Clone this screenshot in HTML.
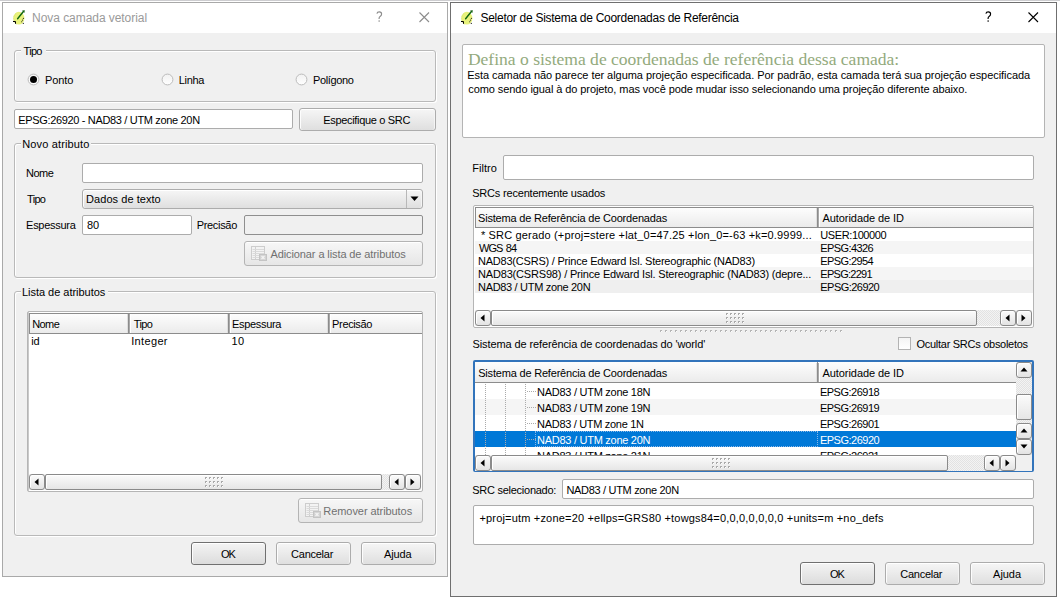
<!DOCTYPE html>
<html><head><meta charset="utf-8"><title>QGIS dialogs</title><style>
*{margin:0;padding:0}
html,body{width:1060px;height:600px;overflow:hidden;background:#fff}
body{position:relative;font-family:'Liberation Sans',sans-serif}
.a{position:absolute;box-sizing:border-box}
.t{position:absolute;white-space:nowrap}
.dlg{background:#f0f0f0}
.title{background:#fff}
.grp{border:1px solid #b9b9b9;border-radius:3px;box-shadow:inset 1px 1px 0 #fff, 1px 1px 0 #fff}
.gtl{background:#f0f0f0}
.le{background:#fff;border:1px solid #acacac;border-radius:2px}
.led{background:#f0f0f0;border:1px solid #8f8f8f;border-radius:2px}
.btn{border:1px solid #acacac;border-radius:3px;background:linear-gradient(#f6f6f6,#dfdfdf);box-shadow:inset 0 1px 0 #fff,inset 1px 0 0 #fdfdfd,inset -1px 0 0 #f4f4f4}
.btnd{border:1px solid #707070;border-radius:3px;background:linear-gradient(#f4f4f4,#dcdcdc);box-shadow:inset 0 1px 0 #fff,inset 1px 0 0 #fdfdfd}
.btnx{border:1px solid #b4b4b4;border-radius:3px;background:linear-gradient(#f7f7f7,#e6e6e6);box-shadow:inset 0 1px 0 #fff}
.frame{background:#fff;border:1px solid #b5b5b5;border-radius:2px}
.hdr{background:linear-gradient(#fdfdfd,#ebebeb);border-top:1px solid #8c8c8c;border-bottom:1px solid #8c8c8c}
.hdiv{background:#8c8c8c}
.sbtn{border:1px solid #8a8a8a;border-radius:3px;background:linear-gradient(#fbfbfb,#e3e3e3);box-shadow:inset 1px 1px 0 #fff}
.slider{border:1px solid #8a8a8a;border-radius:2px;background:linear-gradient(#fbfbfb,#e6e6e6);box-shadow:inset 1px 1px 0 #fff}
.track{background-color:#f3f3f3;background-image:linear-gradient(45deg,#e2e2e2 25%,transparent 25%,transparent 75%,#e2e2e2 75%),linear-gradient(45deg,#e2e2e2 25%,transparent 25%,transparent 75%,#e2e2e2 75%);background-size:2px 2px;background-position:0 0,1px 1px}
.altrow{background:#f5f5f5}
</style></head><body>
<div class="a " style="left:0px;top:0px;width:1060px;height:1px;background:#cdcdd0"></div>
<div class="a dlg" style="left:2px;top:2px;width:446px;height:575px;border:1px solid #a9a9a9"></div>
<div class="a title" style="left:3px;top:3px;width:444px;height:30px;"></div>
<svg class="a" style="left:8px;top:6px" width="22" height="22" viewBox="0 0 22 22">
<ellipse cx="10.9" cy="12.2" rx="5.5" ry="6.4" fill="#e8f27c"/>
<path d="M8.2 7.2 Q5.3 9.5 5.6 13 Q5.9 16.4 8.6 18" fill="none" stroke="#d3df6a" stroke-width="1" stroke-dasharray="1 1"/>
<path d="M9.6 12.8 L15.2 5.8" stroke="#0f640f" stroke-width="1.4" stroke-linecap="round"/>
<path d="M14.1 4.6 L16.8 4.2 L16.3 6.9z" fill="#0c5c0c"/>
<path d="M5 15.5 H7.5 V17.8" stroke="#000" stroke-width="1" fill="none"/>
<circle cx="15.4" cy="12.3" r="0.6" fill="#222"/><circle cx="14.5" cy="14.1" r="0.6" fill="#222"/><circle cx="13.7" cy="15.7" r="0.55" fill="#222"/><circle cx="15.3" cy="17.4" r="0.6" fill="#222"/>
</svg>
<svg class="a" style="left:376px;top:11px" width="8" height="12" viewBox="0 0 8 12"><path d="M0.9 2.6 Q1.3 0.8 3.3 0.8 Q5.6 0.8 5.6 3 Q5.6 4.5 4.1 5.4 Q3.1 6 3.1 7.3 V8" stroke="#8c8c8c" stroke-width="1.15" fill="none"/><rect x="2.5" y="9.4" width="1.3" height="1.3" fill="#8c8c8c"/></svg>
<svg class="a" style="left:419px;top:12px" width="11" height="11" viewBox="0 0 11 11"><path d="M0.5 0.5L10 10M10 0.5L0.5 10" stroke="#8c8c8c" stroke-width="1.1"/></svg>
<div class="a grp" style="left:14px;top:50px;width:422px;height:52px;"></div>
<div class="a gtl" style="left:21px;top:49px;width:25px;height:4px;"></div>
<svg class="a" style="left:27px;top:73px" width="13" height="13" viewBox="0 0 13 13"><defs><linearGradient id="rg" x1="0" y1="0" x2="0" y2="1"><stop offset="0" stop-color="#f1f1f1"/><stop offset="1" stop-color="#ffffff"/></linearGradient></defs><circle cx="6.5" cy="6.5" r="5.4" fill="url(#rg)" stroke="#bcbcbc" stroke-width="1"/><circle cx="6.5" cy="6.5" r="3.5" fill="#000"/></svg>
<svg class="a" style="left:161px;top:73px" width="13" height="13" viewBox="0 0 13 13"><defs><linearGradient id="rg" x1="0" y1="0" x2="0" y2="1"><stop offset="0" stop-color="#f1f1f1"/><stop offset="1" stop-color="#ffffff"/></linearGradient></defs><circle cx="6.5" cy="6.5" r="5.4" fill="url(#rg)" stroke="#bcbcbc" stroke-width="1"/></svg>
<svg class="a" style="left:295px;top:73px" width="13" height="13" viewBox="0 0 13 13"><defs><linearGradient id="rg" x1="0" y1="0" x2="0" y2="1"><stop offset="0" stop-color="#f1f1f1"/><stop offset="1" stop-color="#ffffff"/></linearGradient></defs><circle cx="6.5" cy="6.5" r="5.4" fill="url(#rg)" stroke="#bcbcbc" stroke-width="1"/></svg>
<div class="a le" style="left:14px;top:109px;width:279px;height:20px;"></div>
<div class="a btn" style="left:299px;top:108px;width:137px;height:23px;"></div>
<div class="a grp" style="left:14px;top:143px;width:422px;height:135px;"></div>
<div class="a gtl" style="left:21px;top:142px;width:70px;height:4px;"></div>
<div class="a le" style="left:82px;top:163px;width:341px;height:20px;"></div>
<div class="a btn" style="left:82px;top:189px;width:341px;height:20px;"></div>
<div class="a " style="left:406px;top:190px;width:1px;height:18px;background:#b8b8b8"></div>
<svg class="a" style="left:410px;top:196px" width="9" height="6" viewBox="0 0 9 6"><path d="M0.5 0.5H8.5L4.5 5z" fill="#000"/></svg>
<div class="a le" style="left:82px;top:215px;width:110px;height:20px;"></div>
<div class="a led" style="left:244px;top:215px;width:179px;height:20px;"></div>
<div class="a btnx" style="left:244px;top:241px;width:179px;height:25px;"></div>
<svg class="a" style="left:251px;top:246px" width="16" height="15" viewBox="0 0 16 15">
<rect x="0.5" y="0.5" width="13" height="13" fill="#f3f3f3" stroke="#cdcdcd"/>
<path d="M4.5 1V13" stroke="#d0d0d0"/>
<path d="M1.5 3.5H13M1.5 5.5H13M1.5 7.5H13M1.5 9.5H8M1.5 11.5H8" stroke="#dadada"/>
<rect x="8.5" y="8.5" width="7" height="6" fill="#d3d3d3" stroke="#c4c4c4"/>
<path d="M10.5 10L13.5 13M13.5 10L10.5 13" stroke="#f4f4f4" stroke-width="1.2"/>
</svg>
<div class="a grp" style="left:14px;top:291px;width:422px;height:245px;"></div>
<div class="a gtl" style="left:21px;top:290px;width:87px;height:4px;"></div>
<div class="a frame" style="left:27px;top:311px;width:396px;height:181px;"></div>
<div class="a " style="left:28px;top:312px;width:1px;height:179px;background:#c9c9c9"></div>
<div class="a hdr" style="left:29px;top:313px;width:393px;height:21px;"></div>
<div class="a hdiv" style="left:29px;top:313px;width:1px;height:21px;"></div>
<div class="a " style="left:127px;top:314px;width:1px;height:19px;background:#dedede"></div>
<div class="a hdiv" style="left:128px;top:313px;width:1px;height:21px;"></div>
<div class="a " style="left:129px;top:314px;width:1px;height:19px;background:#a9a9a9"></div>
<div class="a " style="left:130px;top:314px;width:1px;height:19px;background:#fff"></div>
<div class="a " style="left:227px;top:314px;width:1px;height:19px;background:#dedede"></div>
<div class="a hdiv" style="left:228px;top:313px;width:1px;height:21px;"></div>
<div class="a " style="left:229px;top:314px;width:1px;height:19px;background:#a9a9a9"></div>
<div class="a " style="left:230px;top:314px;width:1px;height:19px;background:#fff"></div>
<div class="a " style="left:327px;top:314px;width:1px;height:19px;background:#dedede"></div>
<div class="a hdiv" style="left:328px;top:313px;width:1px;height:21px;"></div>
<div class="a " style="left:329px;top:314px;width:1px;height:19px;background:#a9a9a9"></div>
<div class="a " style="left:330px;top:314px;width:1px;height:19px;background:#fff"></div>
<div class="a " style="left:29px;top:474px;width:392px;height:16px;background:#f0f0f0"></div>
<div class="a sbtn" style="left:29px;top:474px;width:16px;height:16px;"></div>
<svg class="a" style="left:34px;top:478px" width="5" height="8" viewBox="0 0 5 8"><path d="M4.5 0.5V7.5L0.5 4z" fill="#000"/></svg>
<div class="a slider" style="left:45px;top:474px;width:337px;height:16px;"></div>
<svg class="a" style="left:205px;top:477px" width="20" height="12"><path d="M0 0h2v1h-1v1h-1z" fill="#a9a9a9"/><rect x="1" y="1" width="1" height="1" fill="#fff"/><path d="M4 0h2v1h-1v1h-1z" fill="#a9a9a9"/><rect x="5" y="1" width="1" height="1" fill="#fff"/><path d="M8 0h2v1h-1v1h-1z" fill="#a9a9a9"/><rect x="9" y="1" width="1" height="1" fill="#fff"/><path d="M12 0h2v1h-1v1h-1z" fill="#a9a9a9"/><rect x="13" y="1" width="1" height="1" fill="#fff"/><path d="M16 0h2v1h-1v1h-1z" fill="#a9a9a9"/><rect x="17" y="1" width="1" height="1" fill="#fff"/><path d="M0 4h2v1h-1v1h-1z" fill="#a9a9a9"/><rect x="1" y="5" width="1" height="1" fill="#fff"/><path d="M4 4h2v1h-1v1h-1z" fill="#a9a9a9"/><rect x="5" y="5" width="1" height="1" fill="#fff"/><path d="M8 4h2v1h-1v1h-1z" fill="#a9a9a9"/><rect x="9" y="5" width="1" height="1" fill="#fff"/><path d="M12 4h2v1h-1v1h-1z" fill="#a9a9a9"/><rect x="13" y="5" width="1" height="1" fill="#fff"/><path d="M16 4h2v1h-1v1h-1z" fill="#a9a9a9"/><rect x="17" y="5" width="1" height="1" fill="#fff"/><path d="M0 8h2v1h-1v1h-1z" fill="#a9a9a9"/><rect x="1" y="9" width="1" height="1" fill="#fff"/><path d="M4 8h2v1h-1v1h-1z" fill="#a9a9a9"/><rect x="5" y="9" width="1" height="1" fill="#fff"/><path d="M8 8h2v1h-1v1h-1z" fill="#a9a9a9"/><rect x="9" y="9" width="1" height="1" fill="#fff"/><path d="M12 8h2v1h-1v1h-1z" fill="#a9a9a9"/><rect x="13" y="9" width="1" height="1" fill="#fff"/><path d="M16 8h2v1h-1v1h-1z" fill="#a9a9a9"/><rect x="17" y="9" width="1" height="1" fill="#fff"/></svg>
<div class="a track" style="left:382px;top:474px;width:7px;height:16px;"></div>
<div class="a sbtn" style="left:389px;top:474px;width:16px;height:16px;"></div>
<svg class="a" style="left:394px;top:478px" width="5" height="8" viewBox="0 0 5 8"><path d="M4.5 0.5V7.5L0.5 4z" fill="#000"/></svg>
<div class="a sbtn" style="left:405px;top:474px;width:16px;height:16px;"></div>
<svg class="a" style="left:410px;top:478px" width="5" height="8" viewBox="0 0 5 8"><path d="M0.5 0.5V7.5L4.5 4z" fill="#000"/></svg>
<div class="a btnx" style="left:298px;top:498px;width:125px;height:25px;"></div>
<svg class="a" style="left:305px;top:503px" width="16" height="15" viewBox="0 0 16 15">
<rect x="0.5" y="0.5" width="13" height="13" fill="#f3f3f3" stroke="#cdcdcd"/>
<path d="M4.5 1V13" stroke="#d0d0d0"/>
<path d="M1.5 3.5H13M1.5 5.5H13M1.5 7.5H13M1.5 9.5H8M1.5 11.5H8" stroke="#dadada"/>
<rect x="8.5" y="8.5" width="7" height="6" fill="#d3d3d3" stroke="#c4c4c4"/>
<path d="M10.5 10L13.5 13M13.5 10L10.5 13" stroke="#f4f4f4" stroke-width="1.2"/>
</svg>
<div class="a btnd" style="left:191px;top:542px;width:75px;height:23px;"></div>
<div class="a btn" style="left:276px;top:542px;width:75px;height:23px;"></div>
<div class="a btn" style="left:361px;top:542px;width:75px;height:23px;"></div>
<div class="a dlg" style="left:450px;top:2px;width:607px;height:595px;border:1px solid #6f6f6f"></div>
<div class="a title" style="left:451px;top:3px;width:605px;height:30px;"></div>
<svg class="a" style="left:456px;top:6px" width="22" height="22" viewBox="0 0 22 22">
<ellipse cx="10.9" cy="12.2" rx="5.5" ry="6.4" fill="#e8f27c"/>
<path d="M8.2 7.2 Q5.3 9.5 5.6 13 Q5.9 16.4 8.6 18" fill="none" stroke="#d3df6a" stroke-width="1" stroke-dasharray="1 1"/>
<path d="M9.6 12.8 L15.2 5.8" stroke="#0f640f" stroke-width="1.4" stroke-linecap="round"/>
<path d="M14.1 4.6 L16.8 4.2 L16.3 6.9z" fill="#0c5c0c"/>
<path d="M5 15.5 H7.5 V17.8" stroke="#000" stroke-width="1" fill="none"/>
<circle cx="15.4" cy="12.3" r="0.6" fill="#222"/><circle cx="14.5" cy="14.1" r="0.6" fill="#222"/><circle cx="13.7" cy="15.7" r="0.55" fill="#222"/><circle cx="15.3" cy="17.4" r="0.6" fill="#222"/>
</svg>
<svg class="a" style="left:985px;top:11px" width="8" height="12" viewBox="0 0 8 12"><path d="M0.9 2.6 Q1.3 0.8 3.3 0.8 Q5.6 0.8 5.6 3 Q5.6 4.5 4.1 5.4 Q3.1 6 3.1 7.3 V8" stroke="#000" stroke-width="1.15" fill="none"/><rect x="2.5" y="9.4" width="1.3" height="1.3" fill="#000"/></svg>
<svg class="a" style="left:1028px;top:12px" width="11" height="11" viewBox="0 0 11 11"><path d="M0.5 0.5L10 10M10 0.5L0.5 10" stroke="#000" stroke-width="1.1"/></svg>
<div class="a le" style="left:462px;top:44px;width:583px;height:94px;border-color:#b4b4b4"></div>
<div class="a le" style="left:503px;top:155px;width:531px;height:25px;"></div>
<div class="a frame" style="left:473px;top:205px;width:561px;height:123px;"></div>
<div class="a hdr" style="left:475px;top:207px;width:558px;height:21px;"></div>
<div class="a hdiv" style="left:475px;top:207px;width:1px;height:21px;"></div>
<div class="a " style="left:816px;top:208px;width:1px;height:19px;background:#dedede"></div>
<div class="a hdiv" style="left:817px;top:207px;width:1px;height:21px;"></div>
<div class="a " style="left:818px;top:208px;width:1px;height:19px;background:#a9a9a9"></div>
<div class="a " style="left:819px;top:208px;width:1px;height:19px;background:#fff"></div>
<div class="a altrow" style="left:475px;top:241px;width:558px;height:13px;"></div>
<div class="a altrow" style="left:475px;top:267px;width:558px;height:13px;"></div>
<div class="a " style="left:475px;top:280px;width:558px;height:13px;background:#efefef"></div>
<div class="a " style="left:475px;top:310px;width:557px;height:16px;background:#f0f0f0"></div>
<div class="a sbtn" style="left:475px;top:310px;width:16px;height:16px;"></div>
<svg class="a" style="left:480px;top:314px" width="5" height="8" viewBox="0 0 5 8"><path d="M4.5 0.5V7.5L0.5 4z" fill="#000"/></svg>
<div class="a slider" style="left:491px;top:310px;width:486px;height:16px;"></div>
<svg class="a" style="left:726px;top:313px" width="20" height="12"><path d="M0 0h2v1h-1v1h-1z" fill="#a9a9a9"/><rect x="1" y="1" width="1" height="1" fill="#fff"/><path d="M4 0h2v1h-1v1h-1z" fill="#a9a9a9"/><rect x="5" y="1" width="1" height="1" fill="#fff"/><path d="M8 0h2v1h-1v1h-1z" fill="#a9a9a9"/><rect x="9" y="1" width="1" height="1" fill="#fff"/><path d="M12 0h2v1h-1v1h-1z" fill="#a9a9a9"/><rect x="13" y="1" width="1" height="1" fill="#fff"/><path d="M16 0h2v1h-1v1h-1z" fill="#a9a9a9"/><rect x="17" y="1" width="1" height="1" fill="#fff"/><path d="M0 4h2v1h-1v1h-1z" fill="#a9a9a9"/><rect x="1" y="5" width="1" height="1" fill="#fff"/><path d="M4 4h2v1h-1v1h-1z" fill="#a9a9a9"/><rect x="5" y="5" width="1" height="1" fill="#fff"/><path d="M8 4h2v1h-1v1h-1z" fill="#a9a9a9"/><rect x="9" y="5" width="1" height="1" fill="#fff"/><path d="M12 4h2v1h-1v1h-1z" fill="#a9a9a9"/><rect x="13" y="5" width="1" height="1" fill="#fff"/><path d="M16 4h2v1h-1v1h-1z" fill="#a9a9a9"/><rect x="17" y="5" width="1" height="1" fill="#fff"/><path d="M0 8h2v1h-1v1h-1z" fill="#a9a9a9"/><rect x="1" y="9" width="1" height="1" fill="#fff"/><path d="M4 8h2v1h-1v1h-1z" fill="#a9a9a9"/><rect x="5" y="9" width="1" height="1" fill="#fff"/><path d="M8 8h2v1h-1v1h-1z" fill="#a9a9a9"/><rect x="9" y="9" width="1" height="1" fill="#fff"/><path d="M12 8h2v1h-1v1h-1z" fill="#a9a9a9"/><rect x="13" y="9" width="1" height="1" fill="#fff"/><path d="M16 8h2v1h-1v1h-1z" fill="#a9a9a9"/><rect x="17" y="9" width="1" height="1" fill="#fff"/></svg>
<div class="a track" style="left:977px;top:310px;width:23px;height:16px;"></div>
<div class="a sbtn" style="left:1000px;top:310px;width:16px;height:16px;"></div>
<svg class="a" style="left:1005px;top:314px" width="5" height="8" viewBox="0 0 5 8"><path d="M4.5 0.5V7.5L0.5 4z" fill="#000"/></svg>
<div class="a sbtn" style="left:1016px;top:310px;width:16px;height:16px;"></div>
<svg class="a" style="left:1021px;top:314px" width="5" height="8" viewBox="0 0 5 8"><path d="M0.5 0.5V7.5L4.5 4z" fill="#000"/></svg>
<svg class="a" style="left:660px;top:330px" width="185" height="2"><path d="M0 0h2v1h-1v1h-1z" fill="#b5b5b5"/><rect x="1" y="1" width="1" height="1" fill="#fff"/><path d="M5 0h2v1h-1v1h-1z" fill="#b5b5b5"/><rect x="6" y="1" width="1" height="1" fill="#fff"/><path d="M10 0h2v1h-1v1h-1z" fill="#b5b5b5"/><rect x="11" y="1" width="1" height="1" fill="#fff"/><path d="M15 0h2v1h-1v1h-1z" fill="#b5b5b5"/><rect x="16" y="1" width="1" height="1" fill="#fff"/><path d="M20 0h2v1h-1v1h-1z" fill="#b5b5b5"/><rect x="21" y="1" width="1" height="1" fill="#fff"/><path d="M25 0h2v1h-1v1h-1z" fill="#b5b5b5"/><rect x="26" y="1" width="1" height="1" fill="#fff"/><path d="M30 0h2v1h-1v1h-1z" fill="#b5b5b5"/><rect x="31" y="1" width="1" height="1" fill="#fff"/><path d="M35 0h2v1h-1v1h-1z" fill="#b5b5b5"/><rect x="36" y="1" width="1" height="1" fill="#fff"/><path d="M40 0h2v1h-1v1h-1z" fill="#b5b5b5"/><rect x="41" y="1" width="1" height="1" fill="#fff"/><path d="M45 0h2v1h-1v1h-1z" fill="#b5b5b5"/><rect x="46" y="1" width="1" height="1" fill="#fff"/><path d="M50 0h2v1h-1v1h-1z" fill="#b5b5b5"/><rect x="51" y="1" width="1" height="1" fill="#fff"/><path d="M55 0h2v1h-1v1h-1z" fill="#b5b5b5"/><rect x="56" y="1" width="1" height="1" fill="#fff"/><path d="M60 0h2v1h-1v1h-1z" fill="#b5b5b5"/><rect x="61" y="1" width="1" height="1" fill="#fff"/><path d="M65 0h2v1h-1v1h-1z" fill="#b5b5b5"/><rect x="66" y="1" width="1" height="1" fill="#fff"/><path d="M70 0h2v1h-1v1h-1z" fill="#b5b5b5"/><rect x="71" y="1" width="1" height="1" fill="#fff"/><path d="M75 0h2v1h-1v1h-1z" fill="#b5b5b5"/><rect x="76" y="1" width="1" height="1" fill="#fff"/><path d="M80 0h2v1h-1v1h-1z" fill="#b5b5b5"/><rect x="81" y="1" width="1" height="1" fill="#fff"/><path d="M85 0h2v1h-1v1h-1z" fill="#b5b5b5"/><rect x="86" y="1" width="1" height="1" fill="#fff"/><path d="M90 0h2v1h-1v1h-1z" fill="#b5b5b5"/><rect x="91" y="1" width="1" height="1" fill="#fff"/><path d="M95 0h2v1h-1v1h-1z" fill="#b5b5b5"/><rect x="96" y="1" width="1" height="1" fill="#fff"/><path d="M100 0h2v1h-1v1h-1z" fill="#b5b5b5"/><rect x="101" y="1" width="1" height="1" fill="#fff"/><path d="M105 0h2v1h-1v1h-1z" fill="#b5b5b5"/><rect x="106" y="1" width="1" height="1" fill="#fff"/><path d="M110 0h2v1h-1v1h-1z" fill="#b5b5b5"/><rect x="111" y="1" width="1" height="1" fill="#fff"/><path d="M115 0h2v1h-1v1h-1z" fill="#b5b5b5"/><rect x="116" y="1" width="1" height="1" fill="#fff"/><path d="M120 0h2v1h-1v1h-1z" fill="#b5b5b5"/><rect x="121" y="1" width="1" height="1" fill="#fff"/><path d="M125 0h2v1h-1v1h-1z" fill="#b5b5b5"/><rect x="126" y="1" width="1" height="1" fill="#fff"/><path d="M130 0h2v1h-1v1h-1z" fill="#b5b5b5"/><rect x="131" y="1" width="1" height="1" fill="#fff"/><path d="M135 0h2v1h-1v1h-1z" fill="#b5b5b5"/><rect x="136" y="1" width="1" height="1" fill="#fff"/><path d="M140 0h2v1h-1v1h-1z" fill="#b5b5b5"/><rect x="141" y="1" width="1" height="1" fill="#fff"/><path d="M145 0h2v1h-1v1h-1z" fill="#b5b5b5"/><rect x="146" y="1" width="1" height="1" fill="#fff"/><path d="M150 0h2v1h-1v1h-1z" fill="#b5b5b5"/><rect x="151" y="1" width="1" height="1" fill="#fff"/><path d="M155 0h2v1h-1v1h-1z" fill="#b5b5b5"/><rect x="156" y="1" width="1" height="1" fill="#fff"/><path d="M160 0h2v1h-1v1h-1z" fill="#b5b5b5"/><rect x="161" y="1" width="1" height="1" fill="#fff"/><path d="M165 0h2v1h-1v1h-1z" fill="#b5b5b5"/><rect x="166" y="1" width="1" height="1" fill="#fff"/><path d="M170 0h2v1h-1v1h-1z" fill="#b5b5b5"/><rect x="171" y="1" width="1" height="1" fill="#fff"/><path d="M175 0h2v1h-1v1h-1z" fill="#b5b5b5"/><rect x="176" y="1" width="1" height="1" fill="#fff"/><path d="M180 0h2v1h-1v1h-1z" fill="#b5b5b5"/><rect x="181" y="1" width="1" height="1" fill="#fff"/></svg>
<div class="a " style="left:898px;top:337px;width:13px;height:13px;border:1px solid #b3b3b3;background:linear-gradient(#f4f4f4,#fff)"></div>
<div class="a " style="left:473px;top:360px;width:561px;height:112px;background:#fff;border:2px solid #3274bb;border-radius:2px"></div>
<div class="a " style="left:475px;top:362px;width:541px;height:21px;background:linear-gradient(#fdfdfd,#ebebeb);border-bottom:1px solid #8c8c8c"></div>
<div class="a " style="left:816px;top:363px;width:1px;height:19px;background:#dedede"></div>
<div class="a hdiv" style="left:817px;top:362px;width:1px;height:21px;"></div>
<div class="a " style="left:818px;top:363px;width:1px;height:19px;background:#a9a9a9"></div>
<div class="a " style="left:819px;top:363px;width:1px;height:19px;background:#fff"></div>
<div class="a altrow" style="left:475px;top:399px;width:541px;height:16px;"></div>
<div class="a " style="left:475px;top:431px;width:541px;height:16px;background:#0078d7"></div>
<div class="a " style="left:535px;top:431px;width:283px;height:16px;border:1px dotted #8ab8e8"></div>
<svg class="a" style="left:485px;top:384px" width="1" height="71"><rect x="0" y="0" width="1" height="1" fill="#ababab"/><rect x="0" y="2" width="1" height="1" fill="#ababab"/><rect x="0" y="4" width="1" height="1" fill="#ababab"/><rect x="0" y="6" width="1" height="1" fill="#ababab"/><rect x="0" y="8" width="1" height="1" fill="#ababab"/><rect x="0" y="10" width="1" height="1" fill="#ababab"/><rect x="0" y="12" width="1" height="1" fill="#ababab"/><rect x="0" y="14" width="1" height="1" fill="#ababab"/><rect x="0" y="16" width="1" height="1" fill="#ababab"/><rect x="0" y="18" width="1" height="1" fill="#ababab"/><rect x="0" y="20" width="1" height="1" fill="#ababab"/><rect x="0" y="22" width="1" height="1" fill="#ababab"/><rect x="0" y="24" width="1" height="1" fill="#ababab"/><rect x="0" y="26" width="1" height="1" fill="#ababab"/><rect x="0" y="28" width="1" height="1" fill="#ababab"/><rect x="0" y="30" width="1" height="1" fill="#ababab"/><rect x="0" y="32" width="1" height="1" fill="#ababab"/><rect x="0" y="34" width="1" height="1" fill="#ababab"/><rect x="0" y="36" width="1" height="1" fill="#ababab"/><rect x="0" y="38" width="1" height="1" fill="#ababab"/><rect x="0" y="40" width="1" height="1" fill="#ababab"/><rect x="0" y="42" width="1" height="1" fill="#ababab"/><rect x="0" y="44" width="1" height="1" fill="#ababab"/><rect x="0" y="46" width="1" height="1" fill="#ababab"/><rect x="0" y="48" width="1" height="1" fill="#ababab"/><rect x="0" y="50" width="1" height="1" fill="#ababab"/><rect x="0" y="52" width="1" height="1" fill="#ababab"/><rect x="0" y="54" width="1" height="1" fill="#ababab"/><rect x="0" y="56" width="1" height="1" fill="#ababab"/><rect x="0" y="58" width="1" height="1" fill="#ababab"/><rect x="0" y="60" width="1" height="1" fill="#ababab"/><rect x="0" y="62" width="1" height="1" fill="#ababab"/><rect x="0" y="64" width="1" height="1" fill="#ababab"/><rect x="0" y="66" width="1" height="1" fill="#ababab"/><rect x="0" y="68" width="1" height="1" fill="#ababab"/><rect x="0" y="70" width="1" height="1" fill="#ababab"/></svg>
<svg class="a" style="left:505px;top:384px" width="1" height="71"><rect x="0" y="0" width="1" height="1" fill="#ababab"/><rect x="0" y="2" width="1" height="1" fill="#ababab"/><rect x="0" y="4" width="1" height="1" fill="#ababab"/><rect x="0" y="6" width="1" height="1" fill="#ababab"/><rect x="0" y="8" width="1" height="1" fill="#ababab"/><rect x="0" y="10" width="1" height="1" fill="#ababab"/><rect x="0" y="12" width="1" height="1" fill="#ababab"/><rect x="0" y="14" width="1" height="1" fill="#ababab"/><rect x="0" y="16" width="1" height="1" fill="#ababab"/><rect x="0" y="18" width="1" height="1" fill="#ababab"/><rect x="0" y="20" width="1" height="1" fill="#ababab"/><rect x="0" y="22" width="1" height="1" fill="#ababab"/><rect x="0" y="24" width="1" height="1" fill="#ababab"/><rect x="0" y="26" width="1" height="1" fill="#ababab"/><rect x="0" y="28" width="1" height="1" fill="#ababab"/><rect x="0" y="30" width="1" height="1" fill="#ababab"/><rect x="0" y="32" width="1" height="1" fill="#ababab"/><rect x="0" y="34" width="1" height="1" fill="#ababab"/><rect x="0" y="36" width="1" height="1" fill="#ababab"/><rect x="0" y="38" width="1" height="1" fill="#ababab"/><rect x="0" y="40" width="1" height="1" fill="#ababab"/><rect x="0" y="42" width="1" height="1" fill="#ababab"/><rect x="0" y="44" width="1" height="1" fill="#ababab"/><rect x="0" y="46" width="1" height="1" fill="#ababab"/><rect x="0" y="48" width="1" height="1" fill="#ababab"/><rect x="0" y="50" width="1" height="1" fill="#ababab"/><rect x="0" y="52" width="1" height="1" fill="#ababab"/><rect x="0" y="54" width="1" height="1" fill="#ababab"/><rect x="0" y="56" width="1" height="1" fill="#ababab"/><rect x="0" y="58" width="1" height="1" fill="#ababab"/><rect x="0" y="60" width="1" height="1" fill="#ababab"/><rect x="0" y="62" width="1" height="1" fill="#ababab"/><rect x="0" y="64" width="1" height="1" fill="#ababab"/><rect x="0" y="66" width="1" height="1" fill="#ababab"/><rect x="0" y="68" width="1" height="1" fill="#ababab"/><rect x="0" y="70" width="1" height="1" fill="#ababab"/></svg>
<svg class="a" style="left:525px;top:384px" width="1" height="71"><rect x="0" y="0" width="1" height="1" fill="#ababab"/><rect x="0" y="2" width="1" height="1" fill="#ababab"/><rect x="0" y="4" width="1" height="1" fill="#ababab"/><rect x="0" y="6" width="1" height="1" fill="#ababab"/><rect x="0" y="8" width="1" height="1" fill="#ababab"/><rect x="0" y="10" width="1" height="1" fill="#ababab"/><rect x="0" y="12" width="1" height="1" fill="#ababab"/><rect x="0" y="14" width="1" height="1" fill="#ababab"/><rect x="0" y="16" width="1" height="1" fill="#ababab"/><rect x="0" y="18" width="1" height="1" fill="#ababab"/><rect x="0" y="20" width="1" height="1" fill="#ababab"/><rect x="0" y="22" width="1" height="1" fill="#ababab"/><rect x="0" y="24" width="1" height="1" fill="#ababab"/><rect x="0" y="26" width="1" height="1" fill="#ababab"/><rect x="0" y="28" width="1" height="1" fill="#ababab"/><rect x="0" y="30" width="1" height="1" fill="#ababab"/><rect x="0" y="32" width="1" height="1" fill="#ababab"/><rect x="0" y="34" width="1" height="1" fill="#ababab"/><rect x="0" y="36" width="1" height="1" fill="#ababab"/><rect x="0" y="38" width="1" height="1" fill="#ababab"/><rect x="0" y="40" width="1" height="1" fill="#ababab"/><rect x="0" y="42" width="1" height="1" fill="#ababab"/><rect x="0" y="44" width="1" height="1" fill="#ababab"/><rect x="0" y="46" width="1" height="1" fill="#ababab"/><rect x="0" y="48" width="1" height="1" fill="#ababab"/><rect x="0" y="50" width="1" height="1" fill="#ababab"/><rect x="0" y="52" width="1" height="1" fill="#ababab"/><rect x="0" y="54" width="1" height="1" fill="#ababab"/><rect x="0" y="56" width="1" height="1" fill="#ababab"/><rect x="0" y="58" width="1" height="1" fill="#ababab"/><rect x="0" y="60" width="1" height="1" fill="#ababab"/><rect x="0" y="62" width="1" height="1" fill="#ababab"/><rect x="0" y="64" width="1" height="1" fill="#ababab"/><rect x="0" y="66" width="1" height="1" fill="#ababab"/><rect x="0" y="68" width="1" height="1" fill="#ababab"/><rect x="0" y="70" width="1" height="1" fill="#ababab"/></svg>
<svg class="a" style="left:527px;top:391px" width="9" height="1"><rect x="0" y="0" width="1" height="1" fill="#ababab"/><rect x="2" y="0" width="1" height="1" fill="#ababab"/><rect x="4" y="0" width="1" height="1" fill="#ababab"/><rect x="6" y="0" width="1" height="1" fill="#ababab"/><rect x="8" y="0" width="1" height="1" fill="#ababab"/></svg>
<svg class="a" style="left:527px;top:407px" width="9" height="1"><rect x="0" y="0" width="1" height="1" fill="#ababab"/><rect x="2" y="0" width="1" height="1" fill="#ababab"/><rect x="4" y="0" width="1" height="1" fill="#ababab"/><rect x="6" y="0" width="1" height="1" fill="#ababab"/><rect x="8" y="0" width="1" height="1" fill="#ababab"/></svg>
<svg class="a" style="left:527px;top:423px" width="9" height="1"><rect x="0" y="0" width="1" height="1" fill="#ababab"/><rect x="2" y="0" width="1" height="1" fill="#ababab"/><rect x="4" y="0" width="1" height="1" fill="#ababab"/><rect x="6" y="0" width="1" height="1" fill="#ababab"/><rect x="8" y="0" width="1" height="1" fill="#ababab"/></svg>
<svg class="a" style="left:527px;top:439px" width="9" height="1"><rect x="0" y="0" width="1" height="1" fill="#ababab"/><rect x="2" y="0" width="1" height="1" fill="#ababab"/><rect x="4" y="0" width="1" height="1" fill="#ababab"/><rect x="6" y="0" width="1" height="1" fill="#ababab"/><rect x="8" y="0" width="1" height="1" fill="#ababab"/></svg>
<svg class="a" style="left:527px;top:455px" width="9" height="1"><rect x="0" y="0" width="1" height="1" fill="#ababab"/><rect x="2" y="0" width="1" height="1" fill="#ababab"/><rect x="4" y="0" width="1" height="1" fill="#ababab"/><rect x="6" y="0" width="1" height="1" fill="#ababab"/><rect x="8" y="0" width="1" height="1" fill="#ababab"/></svg>
<div class="a track" style="left:1016px;top:362px;width:16px;height:93px;"></div>
<div class="a sbtn" style="left:1016px;top:362px;width:16px;height:16px;"></div>
<svg class="a" style="left:1020px;top:367px" width="8" height="5" viewBox="0 0 8 5"><path d="M0.5 4.5H7.5L4 0.5z" fill="#000"/></svg>
<div class="a slider" style="left:1016px;top:394px;width:16px;height:26px;"></div>
<div class="a sbtn" style="left:1016px;top:423px;width:16px;height:16px;"></div>
<svg class="a" style="left:1020px;top:428px" width="8" height="5" viewBox="0 0 8 5"><path d="M0.5 4.5H7.5L4 0.5z" fill="#000"/></svg>
<div class="a sbtn" style="left:1016px;top:439px;width:16px;height:16px;"></div>
<svg class="a" style="left:1020px;top:444px" width="8" height="5" viewBox="0 0 8 5"><path d="M0.5 0.5H7.5L4 4.5z" fill="#000"/></svg>
<div class="a le" style="left:562px;top:479px;width:472px;height:20px;"></div>
<div class="a le" style="left:473px;top:505px;width:561px;height:40px;"></div>
<div class="a btnd" style="left:800px;top:562px;width:75px;height:23px;"></div>
<div class="a btn" style="left:885px;top:562px;width:75px;height:23px;"></div>
<div class="a btn" style="left:970px;top:562px;width:75px;height:23px;"></div>
<div class="t" style="left:32.1px;top:11px;font-family:'Liberation Sans', sans-serif;font-size:12px;line-height:14px;letter-spacing:-0.058px;color:#9a9a9a;">Nova camada vetorial</div>
<div class="t" style="left:23.5px;top:45px;font-family:'Liberation Sans', sans-serif;font-size:11px;line-height:13px;letter-spacing:-0.667px;color:#000;">Tipo</div>
<div class="t" style="left:45.0px;top:74px;font-family:'Liberation Sans', sans-serif;font-size:11px;line-height:13px;letter-spacing:-0.125px;color:#000;">Ponto</div>
<div class="t" style="left:178.8px;top:74px;font-family:'Liberation Sans', sans-serif;font-size:11px;line-height:13px;letter-spacing:-0.325px;color:#000;">Linha</div>
<div class="t" style="left:312.9px;top:74px;font-family:'Liberation Sans', sans-serif;font-size:11px;line-height:13px;letter-spacing:-0.343px;color:#000;">Polígono</div>
<div class="t" style="left:18.2px;top:114px;font-family:'Liberation Sans', sans-serif;font-size:11px;line-height:13px;letter-spacing:-0.334px;color:#000;">EPSG:26920 - NAD83 / UTM zone 20N</div>
<div class="t" style="left:323.3px;top:114px;font-family:'Liberation Sans', sans-serif;font-size:11px;line-height:13px;letter-spacing:-0.331px;color:#000;">Especifique o SRC</div>
<div class="t" style="left:22.3px;top:138px;font-family:'Liberation Sans', sans-serif;font-size:11px;line-height:13px;letter-spacing:0.133px;color:#000;">Novo atributo</div>
<div class="t" style="left:26.1px;top:167px;font-family:'Liberation Sans', sans-serif;font-size:11px;line-height:13px;letter-spacing:-0.533px;color:#000;">Nome</div>
<div class="t" style="left:27.1px;top:193px;font-family:'Liberation Sans', sans-serif;font-size:11px;line-height:13px;letter-spacing:-0.7px;color:#000;">Tipo</div>
<div class="t" style="left:86.1px;top:193px;font-family:'Liberation Sans', sans-serif;font-size:11px;line-height:13px;letter-spacing:0.046px;color:#000;">Dados de texto</div>
<div class="t" style="left:26.1px;top:219px;font-family:'Liberation Sans', sans-serif;font-size:11px;line-height:13px;letter-spacing:-0.288px;color:#000;">Espessura</div>
<div class="t" style="left:87.1px;top:219px;font-family:'Liberation Sans', sans-serif;font-size:11px;line-height:13px;letter-spacing:-0.1px;color:#000;">80</div>
<div class="t" style="left:196.7px;top:219px;font-family:'Liberation Sans', sans-serif;font-size:11px;line-height:13px;letter-spacing:-0.314px;color:#000;">Precisão</div>
<div class="t" style="left:270.5px;top:248px;font-family:'Liberation Sans', sans-serif;font-size:11px;line-height:13px;letter-spacing:-0.103px;color:#707070;">Adicionar a lista de atributos</div>
<div class="t" style="left:22.0px;top:286px;font-family:'Liberation Sans', sans-serif;font-size:11px;line-height:13px;letter-spacing:-0.029px;color:#000;">Lista de atributos</div>
<div class="t" style="left:32.2px;top:318px;font-family:'Liberation Sans', sans-serif;font-size:11px;line-height:13px;letter-spacing:-0.567px;color:#000;">Nome</div>
<div class="t" style="left:133.7px;top:318px;font-family:'Liberation Sans', sans-serif;font-size:11px;line-height:13px;letter-spacing:-0.567px;color:#000;">Tipo</div>
<div class="t" style="left:232.1px;top:318px;font-family:'Liberation Sans', sans-serif;font-size:11px;line-height:13px;letter-spacing:-0.338px;color:#000;">Espessura</div>
<div class="t" style="left:332.1px;top:318px;font-family:'Liberation Sans', sans-serif;font-size:11px;line-height:13px;letter-spacing:-0.357px;color:#000;">Precisão</div>
<div class="t" style="left:31.3px;top:335px;font-family:'Liberation Sans', sans-serif;font-size:11px;line-height:13px;letter-spacing:-0.3px;color:#000;">id</div>
<div class="t" style="left:131.2px;top:335px;font-family:'Liberation Sans', sans-serif;font-size:11px;line-height:13px;letter-spacing:0.35px;color:#000;">Integer</div>
<div class="t" style="left:231.5px;top:335px;font-family:'Liberation Sans', sans-serif;font-size:11px;line-height:13px;letter-spacing:0.4px;color:#000;">10</div>
<div class="t" style="left:323.3px;top:505px;font-family:'Liberation Sans', sans-serif;font-size:11px;line-height:13px;letter-spacing:-0.062px;color:#707070;">Remover atributos</div>
<div class="t" style="left:221.0px;top:548px;font-family:'Liberation Sans', sans-serif;font-size:11px;line-height:13px;letter-spacing:-1.0px;color:#000;">OK</div>
<div class="t" style="left:291.1px;top:548px;font-family:'Liberation Sans', sans-serif;font-size:11px;line-height:13px;letter-spacing:-0.257px;color:#000;">Cancelar</div>
<div class="t" style="left:384.1px;top:548px;font-family:'Liberation Sans', sans-serif;font-size:11px;line-height:13px;letter-spacing:-0.15px;color:#000;">Ajuda</div>
<div class="t" style="left:480.5px;top:11px;font-family:'Liberation Sans', sans-serif;font-size:12px;line-height:14px;letter-spacing:-0.283px;color:#000;">Seletor de Sistema de Coordenadas de Referência</div>
<div class="t" style="left:468.0px;top:51px;font-family:'Liberation Serif', serif;font-size:16px;line-height:18px;letter-spacing:0px;transform:scaleX(1.0959);transform-origin:1px 0;color:#93aa7d;">Defina o sistema de coordenadas de referência dessa camada:</div>
<div class="t" style="left:467.3px;top:69px;font-family:'Liberation Sans', sans-serif;font-size:11px;line-height:13px;letter-spacing:-0.053px;color:#000;">Esta camada não parece ter alguma projeção especificada. Por padrão, esta camada terá sua projeção especificada</div>
<div class="t" style="left:468.3px;top:83px;font-family:'Liberation Sans', sans-serif;font-size:11px;line-height:13px;letter-spacing:-0.08px;color:#000;">como sendo igual à do projeto, mas você pode mudar isso selecionando uma projeção diferente abaixo.</div>
<div class="t" style="left:472.2px;top:162px;font-family:'Liberation Sans', sans-serif;font-size:11px;line-height:13px;letter-spacing:0.06px;color:#000;">Filtro</div>
<div class="t" style="left:472.2px;top:187px;font-family:'Liberation Sans', sans-serif;font-size:11px;line-height:13px;letter-spacing:-0.191px;color:#000;">SRCs recentemente usados</div>
<div class="t" style="left:478.0px;top:212px;font-family:'Liberation Sans', sans-serif;font-size:11px;line-height:13px;letter-spacing:-0.186px;color:#000;">Sistema de Referência de Coordenadas</div>
<div class="t" style="left:822.5px;top:212px;font-family:'Liberation Sans', sans-serif;font-size:11px;line-height:13px;letter-spacing:-0.067px;color:#000;">Autoridade de ID</div>
<div class="t" style="left:480.9px;top:229px;font-family:'Liberation Sans', sans-serif;font-size:11px;line-height:13px;letter-spacing:0.17px;color:#000;">* SRC gerado (+proj=stere +lat_0=47.25 +lon_0=-63 +k=0.9999...</div>
<div class="t" style="left:479.0px;top:242px;font-family:'Liberation Sans', sans-serif;font-size:11px;line-height:13px;letter-spacing:-1.0px;word-spacing:1.5px;color:#000;">WGS 84</div>
<div class="t" style="left:478.0px;top:255px;font-family:'Liberation Sans', sans-serif;font-size:11px;line-height:13px;letter-spacing:-0.217px;color:#000;">NAD83(CSRS) / Prince Edward Isl. Stereographic (NAD83)</div>
<div class="t" style="left:478.0px;top:268px;font-family:'Liberation Sans', sans-serif;font-size:11px;line-height:13px;letter-spacing:-0.177px;color:#000;">NAD83(CSRS98) / Prince Edward Isl. Stereographic (NAD83) (depre...</div>
<div class="t" style="left:478.0px;top:281px;font-family:'Liberation Sans', sans-serif;font-size:11px;line-height:13px;letter-spacing:-0.316px;color:#000;">NAD83 / UTM zone 20N</div>
<div class="t" style="left:820.3px;top:229px;font-family:'Liberation Sans', sans-serif;font-size:11px;line-height:13px;letter-spacing:-0.4px;color:#000;">USER:100000</div>
<div class="t" style="left:820.3px;top:242px;font-family:'Liberation Sans', sans-serif;font-size:11px;line-height:13px;letter-spacing:-0.6px;color:#000;">EPSG:4326</div>
<div class="t" style="left:820.3px;top:255px;font-family:'Liberation Sans', sans-serif;font-size:11px;line-height:13px;letter-spacing:-0.6px;color:#000;">EPSG:2954</div>
<div class="t" style="left:820.3px;top:268px;font-family:'Liberation Sans', sans-serif;font-size:11px;line-height:13px;letter-spacing:-0.725px;color:#000;">EPSG:2291</div>
<div class="t" style="left:820.3px;top:281px;font-family:'Liberation Sans', sans-serif;font-size:11px;line-height:13px;letter-spacing:-0.533px;color:#000;">EPSG:26920</div>
<div class="t" style="left:472.5px;top:338px;font-family:'Liberation Sans', sans-serif;font-size:11px;line-height:13px;letter-spacing:-0.109px;color:#000;">Sistema de referência de coordenadas do &#x27;world&#x27;</div>
<div class="t" style="left:916.5px;top:338px;font-family:'Liberation Sans', sans-serif;font-size:11px;line-height:13px;letter-spacing:-0.276px;color:#000;">Ocultar SRCs obsoletos</div>
<div class="t" style="left:478.2px;top:367px;font-family:'Liberation Sans', sans-serif;font-size:11px;line-height:13px;letter-spacing:-0.191px;color:#000;">Sistema de Referência de Coordenadas</div>
<div class="t" style="left:822.5px;top:367px;font-family:'Liberation Sans', sans-serif;font-size:11px;line-height:13px;letter-spacing:-0.067px;color:#000;">Autoridade de ID</div>
<div class="t" style="left:537.1px;top:386px;font-family:'Liberation Sans', sans-serif;font-size:11px;line-height:13px;letter-spacing:-0.274px;color:#000;">NAD83 / UTM zone 18N</div>
<div class="t" style="left:537.1px;top:402px;font-family:'Liberation Sans', sans-serif;font-size:11px;line-height:13px;letter-spacing:-0.274px;color:#000;">NAD83 / UTM zone 19N</div>
<div class="t" style="left:537.1px;top:418px;font-family:'Liberation Sans', sans-serif;font-size:11px;line-height:13px;letter-spacing:-0.311px;color:#000;">NAD83 / UTM zone 1N</div>
<div class="t" style="left:537.1px;top:434px;font-family:'Liberation Sans', sans-serif;font-size:11px;line-height:13px;letter-spacing:-0.274px;color:#fff;">NAD83 / UTM zone 20N</div>
<div class="t" style="left:537.1px;top:450px;font-family:'Liberation Sans', sans-serif;font-size:11px;line-height:13px;letter-spacing:-0.274px;color:#000;height:8px;overflow:hidden;">NAD83 / UTM zone 21N</div>
<div class="t" style="left:819.9px;top:386px;font-family:'Liberation Sans', sans-serif;font-size:11px;line-height:13px;letter-spacing:-0.489px;color:#000;">EPSG:26918</div>
<div class="t" style="left:819.9px;top:402px;font-family:'Liberation Sans', sans-serif;font-size:11px;line-height:13px;letter-spacing:-0.489px;color:#000;">EPSG:26919</div>
<div class="t" style="left:819.9px;top:418px;font-family:'Liberation Sans', sans-serif;font-size:11px;line-height:13px;letter-spacing:-0.489px;color:#000;">EPSG:26901</div>
<div class="t" style="left:819.9px;top:434px;font-family:'Liberation Sans', sans-serif;font-size:11px;line-height:13px;letter-spacing:-0.489px;color:#fff;">EPSG:26920</div>
<div class="t" style="left:819.9px;top:450px;font-family:'Liberation Sans', sans-serif;font-size:11px;line-height:13px;letter-spacing:-0.489px;color:#000;height:8px;overflow:hidden;">EPSG:26921</div>
<div class="t" style="left:472.3px;top:484px;font-family:'Liberation Sans', sans-serif;font-size:11px;line-height:13px;letter-spacing:-0.267px;color:#000;">SRC selecionado:</div>
<div class="t" style="left:566.4px;top:484px;font-family:'Liberation Sans', sans-serif;font-size:11px;line-height:13px;letter-spacing:-0.311px;color:#000;">NAD83 / UTM zone 20N</div>
<div class="t" style="left:479.4px;top:512px;font-family:'Liberation Sans', sans-serif;font-size:11px;line-height:13px;letter-spacing:0.185px;color:#000;">+proj=utm +zone=20 +ellps=GRS80 +towgs84=0,0,0,0,0,0,0 +units=m +no_defs</div>
<div class="t" style="left:829.9px;top:568px;font-family:'Liberation Sans', sans-serif;font-size:11px;line-height:13px;letter-spacing:-1.0px;color:#000;">OK</div>
<div class="t" style="left:900.2px;top:568px;font-family:'Liberation Sans', sans-serif;font-size:11px;line-height:13px;letter-spacing:-0.243px;color:#000;">Cancelar</div>
<div class="t" style="left:993.1px;top:568px;font-family:'Liberation Sans', sans-serif;font-size:11px;line-height:13px;letter-spacing:-0.05px;color:#000;">Ajuda</div>
<div class="a " style="left:475px;top:455px;width:557px;height:16px;background:#f0f0f0"></div>
<div class="a sbtn" style="left:475px;top:455px;width:16px;height:16px;"></div>
<svg class="a" style="left:480px;top:459px" width="5" height="8" viewBox="0 0 5 8"><path d="M4.5 0.5V7.5L0.5 4z" fill="#000"/></svg>
<div class="a slider" style="left:491px;top:455px;width:457px;height:16px;"></div>
<svg class="a" style="left:712px;top:458px" width="20" height="12"><path d="M0 0h2v1h-1v1h-1z" fill="#a9a9a9"/><rect x="1" y="1" width="1" height="1" fill="#fff"/><path d="M4 0h2v1h-1v1h-1z" fill="#a9a9a9"/><rect x="5" y="1" width="1" height="1" fill="#fff"/><path d="M8 0h2v1h-1v1h-1z" fill="#a9a9a9"/><rect x="9" y="1" width="1" height="1" fill="#fff"/><path d="M12 0h2v1h-1v1h-1z" fill="#a9a9a9"/><rect x="13" y="1" width="1" height="1" fill="#fff"/><path d="M16 0h2v1h-1v1h-1z" fill="#a9a9a9"/><rect x="17" y="1" width="1" height="1" fill="#fff"/><path d="M0 4h2v1h-1v1h-1z" fill="#a9a9a9"/><rect x="1" y="5" width="1" height="1" fill="#fff"/><path d="M4 4h2v1h-1v1h-1z" fill="#a9a9a9"/><rect x="5" y="5" width="1" height="1" fill="#fff"/><path d="M8 4h2v1h-1v1h-1z" fill="#a9a9a9"/><rect x="9" y="5" width="1" height="1" fill="#fff"/><path d="M12 4h2v1h-1v1h-1z" fill="#a9a9a9"/><rect x="13" y="5" width="1" height="1" fill="#fff"/><path d="M16 4h2v1h-1v1h-1z" fill="#a9a9a9"/><rect x="17" y="5" width="1" height="1" fill="#fff"/><path d="M0 8h2v1h-1v1h-1z" fill="#a9a9a9"/><rect x="1" y="9" width="1" height="1" fill="#fff"/><path d="M4 8h2v1h-1v1h-1z" fill="#a9a9a9"/><rect x="5" y="9" width="1" height="1" fill="#fff"/><path d="M8 8h2v1h-1v1h-1z" fill="#a9a9a9"/><rect x="9" y="9" width="1" height="1" fill="#fff"/><path d="M12 8h2v1h-1v1h-1z" fill="#a9a9a9"/><rect x="13" y="9" width="1" height="1" fill="#fff"/><path d="M16 8h2v1h-1v1h-1z" fill="#a9a9a9"/><rect x="17" y="9" width="1" height="1" fill="#fff"/></svg>
<div class="a track" style="left:948px;top:455px;width:36px;height:16px;"></div>
<div class="a sbtn" style="left:984px;top:455px;width:16px;height:16px;"></div>
<svg class="a" style="left:989px;top:459px" width="5" height="8" viewBox="0 0 5 8"><path d="M4.5 0.5V7.5L0.5 4z" fill="#000"/></svg>
<div class="a sbtn" style="left:1000px;top:455px;width:16px;height:16px;"></div>
<svg class="a" style="left:1005px;top:459px" width="5" height="8" viewBox="0 0 5 8"><path d="M0.5 0.5V7.5L4.5 4z" fill="#000"/></svg>
</body></html>
